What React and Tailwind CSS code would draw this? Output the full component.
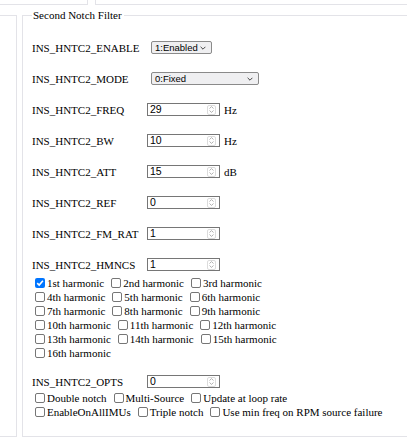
import React from 'react';

const line = 'border-[#e3e3e8]';

const Checkbox = ({ checked, label }) => (
  <label className="mr-[4px] inline-flex items-center">
    <span
      className={
        checked
          ? 'ml-[3px] mr-[2px] flex h-[10px] w-[10px] items-center justify-center rounded-[2px] bg-[#0075ff]'
          : 'ml-[3px] mr-[2px] h-[10px] w-[10px] rounded-[2px] border border-[#767676] bg-white'
      }
    >
      {checked && (
        <svg width="8" height="8" viewBox="0 0 8 8">
          <path d="M1.2 4.2 L3.2 6.1 L6.9 1.8" fill="none" stroke="#fff" strokeWidth="1.6" />
        </svg>
      )}
    </span>
    {label}
  </label>
);

const CheckRows = ({ rows }) => (
  <div className="flex flex-col">
    {rows.map((row, i) => (
      <div key={i} className="flex h-[14px] items-center whitespace-nowrap">
        {row.map((c) => (
          <Checkbox key={c.label} {...c} />
        ))}
      </div>
    ))}
  </div>
);

const Spinner = () => (
  <span className="mr-[3px] flex h-[10px] w-[9px] flex-col items-center justify-center gap-[1px] rounded-[2px] border border-[#dcdcdc]">
    <svg width="5" height="3" viewBox="0 0 5 3">
      <path d="M0.5 2.5 L2.5 0.6 L4.5 2.5" fill="none" stroke="#a8a8a8" strokeWidth="0.9" />
    </svg>
    <svg width="5" height="3" viewBox="0 0 5 3">
      <path d="M0.5 0.5 L2.5 2.4 L4.5 0.5" fill="none" stroke="#a8a8a8" strokeWidth="0.9" />
    </svg>
  </span>
);

const NumberInput = ({ value, unit }) => (
  <div className="flex items-center">
    <div className="flex h-[13px] w-[73px] items-center justify-between border border-[#767676] bg-white pl-[2px] font-['Liberation_Sans',Arial,sans-serif] text-[10.5px] leading-none text-black">
      <span>{value}</span>
      <Spinner />
    </div>
    {unit && <span className="ml-[4px]">{unit}</span>}
  </div>
);

const Select = ({ value, width }) => (
  <div
    className={
      'ml-[4px] flex h-[13px] items-center justify-between rounded-[2px] border border-[#8a8a8a] bg-[#efeff1] pl-[3px] pr-[5px] font-[\'Liberation_Sans\',Arial,sans-serif] text-[9.5px] leading-none text-black ' +
      width
    }
  >
    <span>{value}</span>
    <svg width="6" height="4" viewBox="0 0 6 4">
      <path d="M0.6 0.8 L3 3.2 L5.4 0.8" fill="none" stroke="#333" strokeWidth="0.9" />
    </svg>
  </div>
);

const Row = ({ label, children }) => (
  <div className="flex h-[15px] items-center">
    <span className="w-[115px] shrink-0 whitespace-nowrap">{label}</span>
    {children}
  </div>
);

const harmonics = [
  [{ label: '1st harmonic', checked: true }, { label: '2nd harmonic' }, { label: '3rd harmonic' }],
  [{ label: '4th harmonic' }, { label: '5th harmonic' }, { label: '6th harmonic' }],
  [{ label: '7th harmonic' }, { label: '8th harmonic' }, { label: '9th harmonic' }],
  [{ label: '10th harmonic' }, { label: '11th harmonic' }, { label: '12th harmonic' }],
  [{ label: '13th harmonic' }, { label: '14th harmonic' }, { label: '15th harmonic' }],
  [{ label: '16th harmonic' }],
];

const opts = [
  [{ label: 'Double notch' }, { label: 'Multi-Source' }, { label: 'Update at loop rate' }],
  [{ label: 'EnableOnAllIMUs' }, { label: 'Triple notch' }, { label: 'Use min freq on RPM source failure' }],
];

export default function App() {
  return (
    <div className="h-[437px] w-[407px] overflow-hidden bg-white font-['Liberation_Serif','Times_New_Roman',serif] text-[11px] leading-[14px] text-black">
      {/* bottoms of the panels above */}
      <div className="flex h-[5px]">
        <div className={'w-[88px] shrink-0 border-r border-b ' + line} />
        <div className={'ml-[7px] flex-1 border-l border-b ' + line} />
      </div>

      <div className="flex items-start">
        <div className={'mt-[10px] h-[422px] w-[17px] shrink-0 border-t border-r border-b ' + line} />

        <fieldset className={'ml-[5px] mt-[4px] h-[428px] min-w-0 flex-1 border-t border-l border-b pl-[9px] ' + line}>
          <legend className="pl-[1px] pr-[2px] leading-[13px]">Second Notch Filter</legend>

          <div className="flex flex-col gap-[16px] pt-[18px]">
            <Row label="INS_HNTC2_ENABLE">
              <Select value="1:Enabled" width="w-[61px]" />
            </Row>
            <Row label="INS_HNTC2_MODE">
              <Select value="0:Fixed" width="w-[108px]" />
            </Row>
            <Row label="INS_HNTC2_FREQ">
              <NumberInput value="29" unit="Hz" />
            </Row>
            <Row label="INS_HNTC2_BW">
              <NumberInput value="10" unit="Hz" />
            </Row>
            <Row label="INS_HNTC2_ATT">
              <NumberInput value="15" unit="dB" />
            </Row>
            <Row label="INS_HNTC2_REF">
              <NumberInput value="0" />
            </Row>
            <Row label="INS_HNTC2_FM_RAT">
              <NumberInput value="1" />
            </Row>
            <Row label="INS_HNTC2_HMNCS">
              <NumberInput value="1" />
            </Row>
          </div>

          <div className="mt-[4px]">
            <CheckRows rows={harmonics} />
          </div>

          <div className="mt-[14px]">
            <Row label="INS_HNTC2_OPTS">
              <NumberInput value="0" />
            </Row>
          </div>

          <div className="mt-[2px]">
            <CheckRows rows={opts} />
          </div>
        </fieldset>
      </div>
    </div>
  );
}
